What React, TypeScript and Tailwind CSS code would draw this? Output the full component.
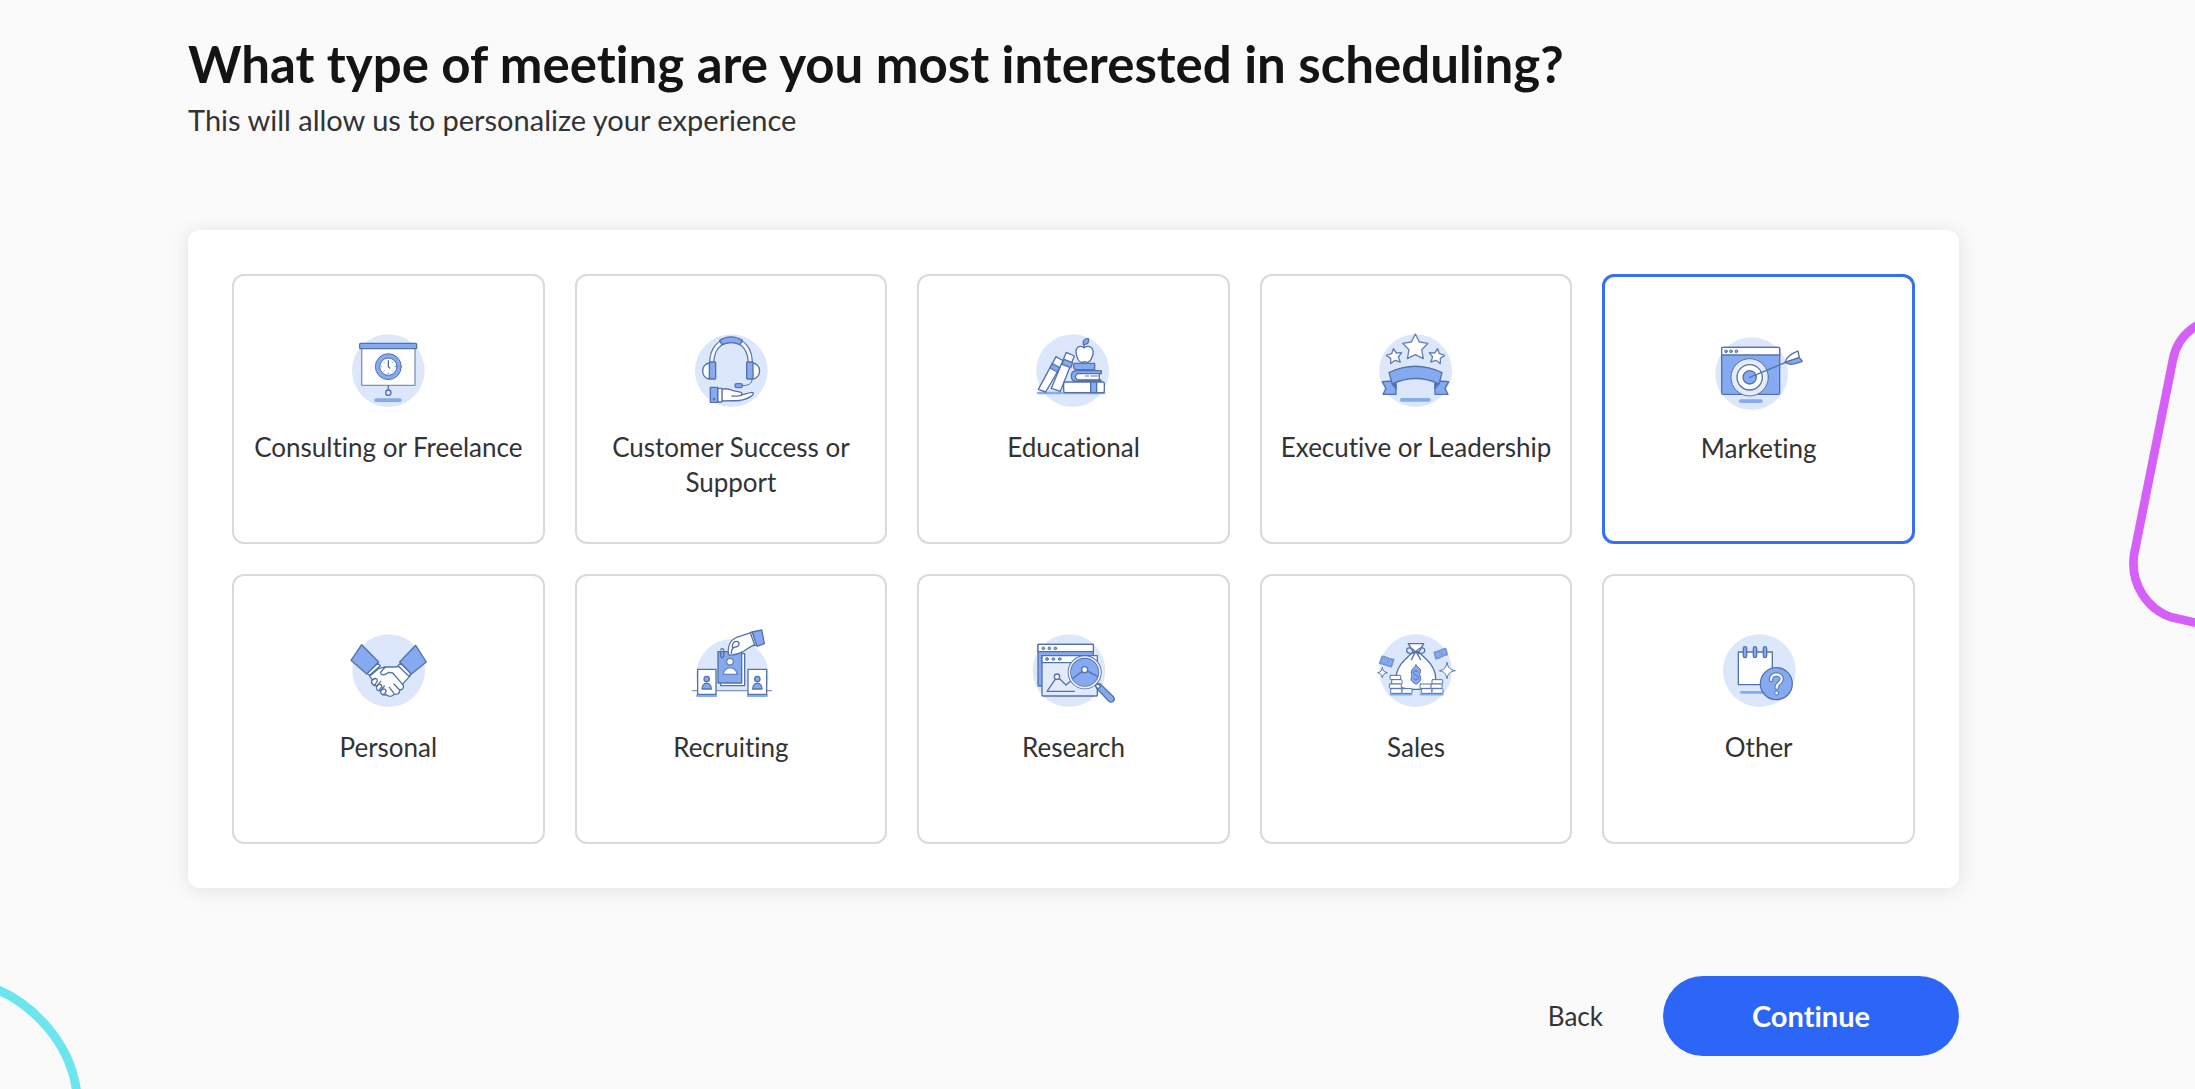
import React, { useState } from 'react';

const LINE = '#5472aa';
const BLUE = '#86aaf1';
const PALE = '#dce7fb';

interface IconProps {
  viewBox?: string;
  cx?: number;
  cy?: number;
  children: React.ReactNode;
}

const Icon: React.FC<IconProps> = ({ viewBox = '0 0 300 270', cx = 149, cy = 140, children }) => (
  <svg
    viewBox={viewBox}
    className="h-[90px] w-[100px] shrink-0"
    fill="none"
    stroke={LINE}
    strokeWidth="4"
    strokeLinejoin="round"
    strokeLinecap="round"
    aria-hidden="true"
  >
    <circle cx={cx} cy={cy} r="109" fill={PALE} stroke="none" />
    {children}
  </svg>
);

const ConsultingIcon = () => (
  <Icon viewBox="-2 0 300 270">
    <rect x="107" y="223" width="82" height="11" rx="5" fill={BLUE} stroke="none" />
    <rect x="69" y="72" width="160" height="112" rx="2" fill="#fff" stroke="#8193b8" />
    <rect x="63" y="58" width="171" height="16" rx="3" fill={BLUE} />
    <circle cx="149" cy="128" r="32" fill="#fff" stroke={BLUE} strokeWidth="13" />
    <circle cx="149" cy="128" r="39" strokeWidth="3" />
    <circle cx="149" cy="128" r="26" strokeWidth="3" />
    <path d="M149 110v18l4 4" />
    <path d="M149 146v3M168 128h3M127 128h3M135 114l2 2M163 114l-2 2M135 142l2-2M163 142l-2-2" strokeWidth="2" />
    <path d="M149 185v13" />
    <circle cx="149" cy="206" r="8" />
  </Icon>
);

const SupportIcon = () => (
  <Icon viewBox="6 0 300 270" cx={157}>
    <path d="M98 120C98 76 120 50 156 49s58 27 58 71" strokeWidth="16" strokeLinecap="butt" />
    <path d="M98 120C98 76 120 50 156 49s58 27 58 71" stroke="#f4f7fd" strokeWidth="9" strokeLinecap="butt" />
    <path d="M122 49c21-14 47-14 68 0l-7 13c-18-8-36-8-54 0z" fill={BLUE} />
    <path d="M92 117c-28 2-28 46 0 48z" fill="#fff" />
    <path d="M220 117c29 2 29 46 0 48z" fill="#fff" />
    <rect x="91" y="114" width="19" height="51" rx="2" fill={BLUE} />
    <rect x="203" y="114" width="19" height="51" rx="2" fill={BLUE} />
    <path d="M219 167c0 12-10 18-30 18" strokeWidth="3" />
    <rect x="168" y="179" width="22" height="12" rx="5" fill={BLUE} />
    <path d="M128 196c18-7 28 5 45 6 12 1 19 5 14 11 9-2 18-6 31-8 8 0 5 8-2 12-17 11-33 14-52 13l-36 1z" fill="#fff" />
    <path d="M187 213c-6 5-17 4-28 3" />
    <rect x="116" y="193" width="13" height="41" rx="2" fill="#fff" />
    <path d="M94 190h22v45H94z" fill={BLUE} />
    <circle cx="105" cy="225" r="2" />
  </Icon>
);

const EducationalIcon = () => (
  <Icon>
    <path d="M45 207h70M122 207h122" stroke={BLUE} strokeWidth="7" />
    <g fill="#fff">
      <path d="M99 98l23 13-54 93-22-8z" />
      <path d="M130 85l24 11-42 106-27-9z" />
      <rect x="122" y="174" width="122" height="32" rx="5" />
      <path d="M154 147h75v22h-75z" />
    </g>
    <path d="M88 119l22 12-7 13-22-12z" fill={BLUE} />
    <path d="M123 106l26 10-6 15-26-10z" fill={BLUE} />
    <path d="M203 174h18v32h-18z" fill={BLUE} />
    <path d="M155 118h60v19h-57c-8-4-8-14-3-19z" fill={BLUE} />
    <path d="M235 140h-78c-16 4-16 29 0 32h77v-4h-70c-9-5-9-15 0-19h71z" fill={BLUE} />
    <path d="M187 156h10M204 156h20" strokeWidth="3" />
    <path d="M183 71c-17-11-27 4-23 19 2 12 6 24 17 25l7-2 9 2c12-2 14-15 17-25 3-16-10-29-27-19z" fill="#fff" />
    <path d="M184 71l-2-10" />
    <path d="M181 61c-3-10 4-18 15-17 4 10-3 19-15 17z" fill={BLUE} />
  </Icon>
);

const LeadershipIcon = () => (
  <Icon>
    <rect x="102" y="222" width="92" height="11" rx="5" fill={BLUE} stroke="none" />
    <g fill="#fff" stroke="#667fad">
      <path d="M148 30l12 24 26 4-19 19 5 27-24-12-24 12 5-27-19-19 26-4z" />
      <path d="M82 74l9 13 16-1-10 13 6 15-16-5-13 10v-16l-13-9 16-5z" />
      <path d="M215 74l-9 13-16-1 10 13-6 15 16-5 13 10v-16l13-9-16-5z" />
    </g>
    <path d="M78 171l-29 2 11 20-9 18h39v-30z" fill={BLUE} />
    <path d="M219 171l29 2-11 20 9 18h-39v-30z" fill={BLUE} />
    <path d="M79 180l11 14v-18zM218 180l-11 14v-18z" fill={LINE} />
    <path d="M69 146c51-25 107-25 159 0l-9 34c-47-22-93-22-140 0z" fill={BLUE} />
  </Icon>
);

const MarketingIcon = () => (
  <Icon viewBox="12 0 300 270" cx={140} cy={146}>
    <rect x="102" y="223" width="71" height="11" rx="5" fill={BLUE} stroke="none" />
    <rect x="50" y="67" width="174" height="141" rx="4" fill={BLUE} />
    <path d="M50 90V71q0-4 4-4h166q4 0 4 4v19z" fill="#fff" />
    <g fill={BLUE} strokeWidth="3">
      <circle cx="63" cy="79" r="4" />
      <circle cx="78" cy="79" r="4" />
      <circle cx="94" cy="79" r="4" />
    </g>
    <circle cx="134" cy="157" r="56" fill="#e4ecfb" strokeWidth="3" />
    <circle cx="134" cy="157" r="38" fill="#fff" />
    <circle cx="134" cy="157" r="20" fill={BLUE} />
    <path d="M134 157l106-44" />
    <path d="M240 112c6-20 20-25 39-34l4 20z" fill="#fff" />
    <path d="M240 112l43-14 9 11c-20 7-38 14-52 3z" fill={BLUE} />
  </Icon>
);

const PersonalIcon = () => (
  <Icon viewBox="-3 0 300 270">
    <path d="M120 133l20-4h26l18-2 30 28-24 26c7 6 3 18-8 17 1 10-8 16-17 12-5 10-18 9-23 1-10 6-19-2-17-11-11 2-17-8-10-15-13 2-22-9-15-18l-8-10z" fill="#fff" />
    <path d="M139 129l-15 17c3 10 17 7 25-1l12 2 30 34M165 180l17 18M151 190l14 18M100 167l9-4M115 185l10-13M125 200l11-14" />
    <path d="M101 168c8-9 18-2 12 7l-6 8M114 185c8-9 19-2 12 7l-6 7M128 198c8-7 17 0 11 8l-5 5" />
    <path d="M116 118l8 7-32 29-8-6zM185 118l-8 7 32 31 8-6z" fill="#fff" />
    <path d="M68 62l51 52-36 36-47-41z" fill={BLUE} />
    <path d="M230 64l-48 50 35 36 45-36z" fill={BLUE} />
  </Icon>
);

const RecruitingIcon = () => (
  <Icon viewBox="3 13 300 270" cx={157} cy={167}>
    <path d="M40 215h230v65H40z" fill="#fff" stroke="none" />
    <path d="M38 213h236" stroke="#8096bf" />
    <path d="M52 228h56M204 228h56" stroke={BLUE} strokeWidth="8" />
    <path d="M122 102h72v96h-72z" fill="#fff" />
    <path d="M114 96h71v94h-71z" fill={BLUE} />
    <path d="M122 98v12q4 9 9 0V91q-4-10-9 0" />
    <g fill="#fff" stroke="#6480b5">
      <circle cx="150" cy="126" r="10" />
      <path d="M130 164c0-26 41-26 41 0z" />
    </g>
    <path d="M53 149h55v75H53zM204 149h56v75h-56z" fill="#fff" />
    <g fill={BLUE}>
      <circle cx="80" cy="178" r="8" />
      <path d="M66 208c0-23 28-23 28 0z" />
      <circle cx="232" cy="178" r="8" />
      <path d="M218 208c0-23 28-23 28 0z" />
    </g>
    <path d="M145 101c-2-29 8-44 34-51l34-11 12 37c-14 3-24 12-36 20-13 7-25 11-40 10-3 0-4-2-4-5z" fill="#fff" />
    <path d="M154 101c0-13 3-19 13-19 9-1 14-12 6-16-9-4-17 5-16 16" />
    <path d="M211 39l6-2 14 38-6 3z" fill="#fff" />
    <path d="M217 37l28-6 8 41-22 8z" fill={BLUE} />
  </Icon>
);

const ResearchIcon = () => (
  <Icon viewBox="-2 0 300 270" cx={136}>
    <rect x="43" y="61" width="166" height="125" rx="2" fill={BLUE} />
    <path d="M43 61h166v22H43z" fill="#fff" />
    <rect x="55" y="95" width="166" height="121" rx="2" fill="#e3ebfb" />
    <path d="M55 95h166v21H55z" fill="#fff" />
    <g fill={BLUE} strokeWidth="3">
      <circle cx="59" cy="73" r="4" />
      <circle cx="77" cy="73" r="4" />
      <circle cx="95" cy="73" r="4" />
      <circle cx="70" cy="105" r="4" />
      <circle cx="89" cy="105" r="4" />
      <circle cx="108" cy="105" r="4" />
    </g>
    <path d="M70 202h82M72 199l27-39M103 160l24 23 15-13" />
    <circle cx="100" cy="158" r="8" fill="#fff" />
    <path d="M216 185l13-6 41 40c6 12-6 20-15 12l-36-38z" fill={BLUE} />
    <path d="M215 186l7-8 9 9-8 8z" fill="#fff" />
    <circle cx="183" cy="145" r="46" fill={BLUE} strokeWidth="10" />
    <circle cx="183" cy="145" r="46" stroke="#edf2fc" strokeWidth="5" />
    <path d="M148 163l32-24M187 139l34 18" />
    <circle cx="183" cy="137" r="9" fill="#fff" />
  </Icon>
);

const SalesIcon = () => (
  <Icon>
    <path d="M74 211h62M164 211h66" stroke={BLUE} strokeWidth="7" />
    <path d="M139 86c-26 23-49 43-49 78 0 25 18 32 59 32s60-7 60-32c0-35-23-55-49-78z" fill="#fff" />
    <path d="M127 59h46l-14 24h-18z" fill="#fff" />
    <path d="M149 84c-13-17-29-15-27-3 2 8 14 10 27 3 13 7 26 5 27-3 2-12-14-14-27 3zM147 86l-11 21M152 86l12 21" />
    <path d="M150 123c4 5 14 11 14 19 0 6-5 8-2 13s4 14-2 19l-10 7-11-8c-6-5-4-11-2-16s-2-7-1-13c1-10 10-13 14-21z" fill={BLUE} strokeWidth="3" />
    <path d="M156 144c-6-7-15-3-13 4 1 8 15 4 14 13-1 7-11 9-14 2" strokeWidth="3" />
    <g fill="#fff" strokeWidth="3">
      <rect x="72" y="154" width="32" height="13" rx="2" />
      <rect x="77" y="167" width="31" height="13" rx="2" />
      <rect x="70" y="180" width="36" height="13" rx="2" />
      <rect x="74" y="194" width="34" height="14" rx="2" />
      <rect x="108" y="194" width="30" height="14" rx="2" />
      <rect x="162" y="180" width="34" height="13" rx="2" />
      <rect x="166" y="194" width="32" height="14" rx="2" />
      <rect x="198" y="167" width="32" height="13" rx="2" />
      <rect x="195" y="180" width="33" height="13" rx="2" />
      <rect x="198" y="194" width="33" height="14" rx="2" />
      <path d="M243 116c3 15 8 21 25 24-17 3-22 9-25 24-3-15-8-21-23-24 15-3 20-9 23-24zM49 132c2 9 5 12 15 14-10 2-13 6-15 15-2-9-5-13-14-15 9-2 12-5 14-14z" />
    </g>
    <path d="M49 97c13 1 22 11 34 9l-7 22c-13-1-23-11-35-10z" fill={BLUE} stroke="#7795d0" strokeWidth="5" />
    <path d="M205 85c12 0 22-11 34-11l5 18c-13 0-22 11-34 12z" fill={BLUE} stroke="#7795d0" strokeWidth="5" />
    <circle cx="62" cy="112" r="3" fill="#fff" strokeWidth="2" />
    <circle cx="225" cy="89" r="3" fill="#fff" strokeWidth="2" />
  </Icon>
);

const OtherIcon = () => (
  <Icon viewBox="-2 0 300 270">
    <path d="M95 205h65" stroke={BLUE} strokeWidth="8" />
    <path d="M86 84h102v98H86z" fill="#fff" />
    <g fill={BLUE}>
      <rect x="101" y="68" width="10" height="33" rx="5" />
      <rect x="131" y="68" width="10" height="33" rx="5" />
      <rect x="161" y="68" width="10" height="33" rx="5" />
    </g>
    <circle cx="200" cy="179" r="48" fill={BLUE} />
    <path d="M184 168c-2-21 32-22 32-3 0 13-15 11-15 26" strokeWidth="13" />
    <path d="M184 168c-2-21 32-22 32-3 0 13-15 11-15 26" stroke="#f3f6fd" strokeWidth="7" />
    <circle cx="201" cy="207" r="6" fill="#f3f6fd" strokeWidth="3" />
  </Icon>
);

const options = [
  { label: 'Consulting or Freelance', icon: ConsultingIcon },
  { label: 'Customer Success or Support', icon: SupportIcon },
  { label: 'Educational', icon: EducationalIcon },
  { label: 'Executive or Leadership', icon: LeadershipIcon },
  { label: 'Marketing', icon: MarketingIcon },
  { label: 'Personal', icon: PersonalIcon },
  { label: 'Recruiting', icon: RecruitingIcon },
  { label: 'Research', icon: ResearchIcon },
  { label: 'Sales', icon: SalesIcon },
  { label: 'Other', icon: OtherIcon },
];

export default function App() {
  const [selected, setSelected] = useState('Marketing');

  return (
    <div className="relative min-h-screen overflow-hidden bg-[#fafafa] font-['Lato',sans-serif] text-[#333] [font-variant-ligatures:none]">
      <svg viewBox="0 0 300 1020" className="absolute right-0 top-[300px] h-[340px] w-[100px]" fill="none" aria-hidden="true">
        <path d="M310 74C272 96 243 130 234 178L117 765C105 855 160 930 230 952L310 970" stroke="#d55ff8" strokeWidth="26" />
      </svg>
      <svg viewBox="0 0 300 387" className="absolute bottom-0 left-0 h-[129px] w-[100px]" fill="none" aria-hidden="true">
        <path d="M-10 88C90 130 210 240 230 395" stroke="#6be6ef" strokeWidth="27" />
      </svg>

      <main className="relative pt-8 pb-8 pl-[188px] pr-[236px]">
        <h1 className="text-[51px] font-bold leading-[64px] text-[#141414]">
          What type of meeting are you most interested in scheduling?
        </h1>
        <p className="mt-2 text-[29px] leading-8">This will allow us to personalize your experience</p>

        <div className="mt-[94px] grid grid-cols-5 gap-[30px] rounded-xl bg-white p-11 shadow-[0_2px_20px_rgba(0,0,0,0.1)]">
          {options.map(({ label, icon: OptionIcon }) => (
            <button
              key={label}
              type="button"
              aria-pressed={selected === label}
              onClick={() => setSelected(label)}
              className={`flex min-h-[270px] flex-col items-center rounded-xl bg-white px-3 pt-12 ${
                selected === label ? 'border-3 border-[#3470f5]' : 'border-2 border-[#dadada]'
              }`}
            >
              <OptionIcon />
              <span className="mt-4 text-center text-[26px] leading-[35px]">{label}</span>
            </button>
          ))}
        </div>

        <div className="mt-[88px] flex items-center justify-end gap-[60px]">
          <button type="button" className="text-[26px] leading-8">Back</button>
          <button type="button" className="h-20 w-[296px] rounded-full bg-[#2b66f6] text-[29px] font-bold text-white">
            Continue
          </button>
        </div>
      </main>
    </div>
  );
}
